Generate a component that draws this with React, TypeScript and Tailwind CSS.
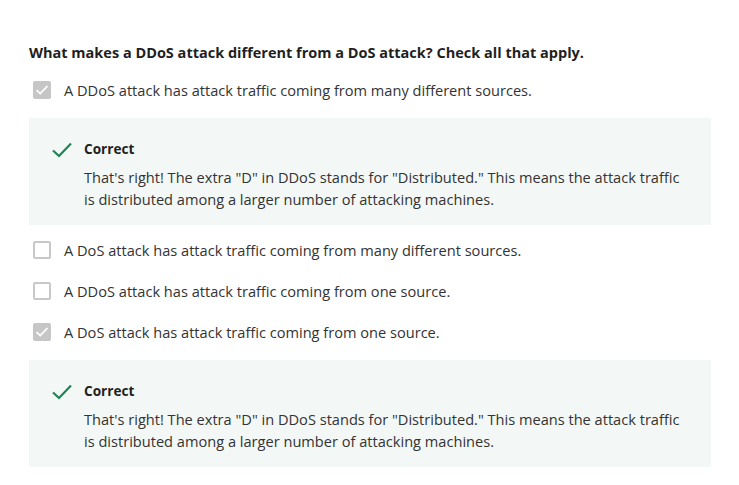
import React from 'react';

const options = [
  { text: 'A DDoS attack has attack traffic coming from many different sources.', checked: true },
  { text: 'A DoS attack has attack traffic coming from many different sources.', checked: false },
  { text: 'A DDoS attack has attack traffic coming from one source.', checked: false },
  { text: 'A DoS attack has attack traffic coming from one source.', checked: true },
];

function Checkbox({ checked }: { checked: boolean }) {
  if (checked) {
    return (
      <span className="flex h-[18px] w-[18px] shrink-0 items-center justify-center rounded-[2px] bg-[#c6c6c6]">
        <svg width="18" height="18" viewBox="0 0 18 18" fill="none">
          <path d="M3.5 9.2 L7.2 12.6 L14.5 5" stroke="white" strokeWidth="1.8" />
        </svg>
      </span>
    );
  }
  return <span className="h-[18px] w-[18px] shrink-0 rounded-[2px] border-2 border-[#c8c8c8] bg-white" />;
}

function Feedback() {
  return (
    <div className="flex bg-[#f3f8f6] pl-[23px] pt-[21px] pb-[15px]">
      <svg width="20" height="20" viewBox="0 0 20 20" fill="none" className="mt-[1px] shrink-0">
        <path d="M1 10.5 L7 16 L19 3.5" stroke="#1f8354" strokeWidth="2.2" />
      </svg>
      <div className="ml-[12px]">
        <div className="text-[13.6px] font-bold leading-[20px] text-[#1f1f1f]">Correct</div>
        <p className="mt-[7px] text-[14.6px] leading-[22px] text-[#333333]">
          That's right! The extra "D" in DDoS stands for "Distributed." This means the attack traffic
          <br />
          is distributed among a larger number of attacking machines.
        </p>
      </div>
    </div>
  );
}

export default function App() {
  return (
    <div className="min-h-[485px] w-[739px] bg-white px-[29px] pt-[43px] font-['Open_Sans','Noto_Sans',sans-serif]">
      <h1 className="text-[14.5px] font-bold leading-[20px] text-[#1f1f1f]">
        What makes a DDoS attack different from a DoS attack? Check all that apply.
      </h1>
      <div className="mt-[17px] flex flex-col">
        {options.map((opt, i) => (
          <div key={i}>
            <div className={`flex h-[20px] items-center gap-[13px] pl-[4px] ${i === 1 ? 'mt-[15px]' : i > 1 ? 'mt-[21px]' : ''}`}>
              <Checkbox checked={opt.checked} />
              <span className="text-[14.6px] leading-[20px] text-[#333333]">{opt.text}</span>
            </div>
            {opt.checked && (
              <div className="mt-[18px] w-[682px]">
                <Feedback />
              </div>
            )}
          </div>
        ))}
      </div>
    </div>
  );
}
